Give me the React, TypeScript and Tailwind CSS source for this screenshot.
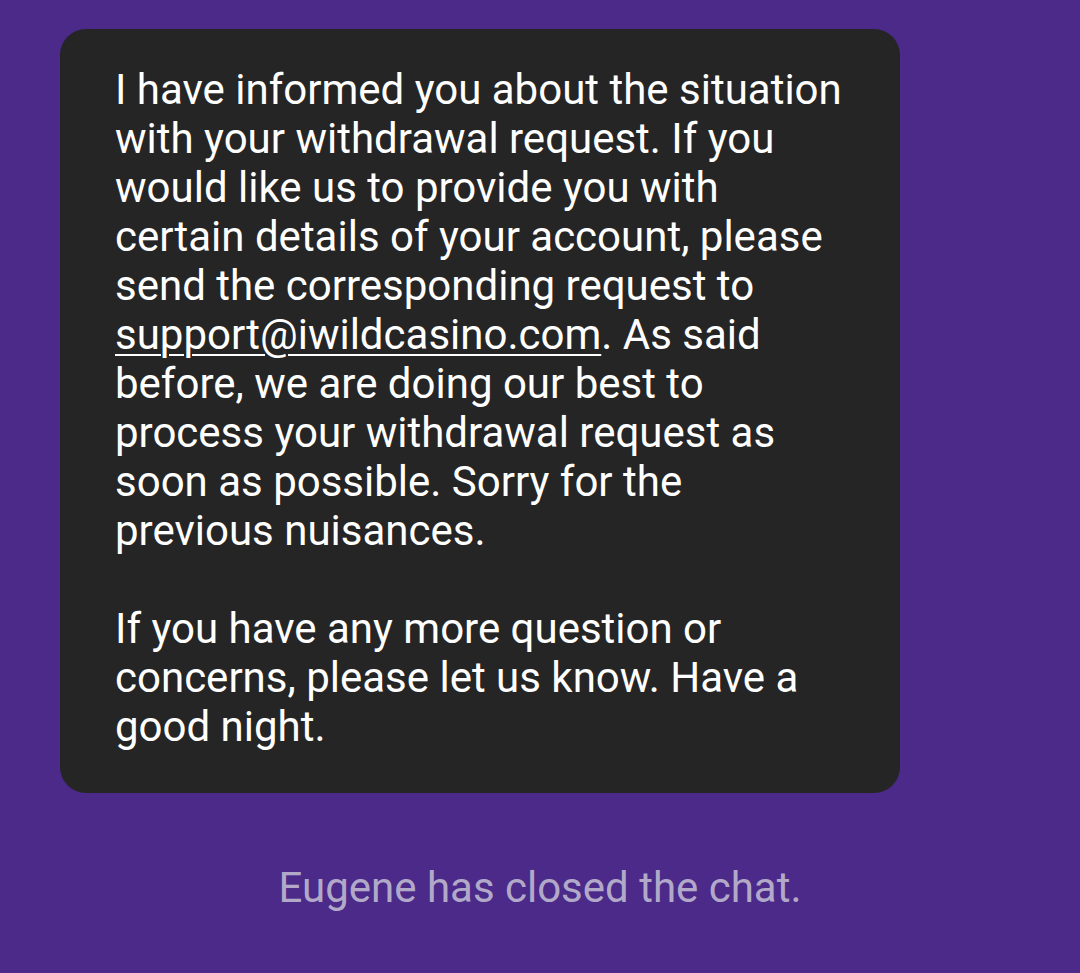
export default function App() {
  return (
    <div className="min-h-[973px] w-[1080px] bg-[#4b2a89] pt-[29px] font-['Roboto',sans-serif]">
      <div className="ml-[60px] w-[840px] rounded-[26px] bg-[#252525] pb-[42px] pl-[55px] pr-[52px] pt-[36px] text-[42px] leading-[49px] text-white">
        <p>
          I have informed you about the situation with your withdrawal request. If you would like us to provide you
          with certain details of your account, please send the corresponding request to{' '}
          <span className="underline decoration-[2px] underline-offset-[5px]">support@iwildcasino.com</span>. As said
          before, we are doing our best to process your withdrawal request as soon as possible. Sorry for the
          previous nuisances.
        </p>
        <p className="mt-[49px]">
          If you have any more question or concerns, please let us know. Have a good night.
        </p>
      </div>
      <p className="mt-[70px] text-center text-[42px] leading-[49px] text-[#b2a9c9]">Eugene has closed the chat.</p>
    </div>
  );
}
